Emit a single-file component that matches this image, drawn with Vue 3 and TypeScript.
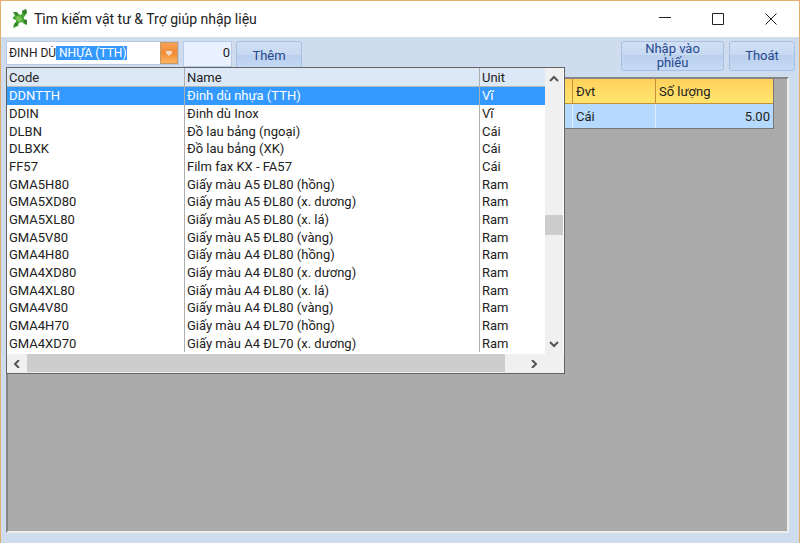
<script setup lang="ts">
import { onMounted, ref } from 'vue'

interface Item {
  code: string
  name: string
  unit: string
}

const items: Item[] = [
  { code: 'DDNTTH', name: 'Đinh dù nhựa (TTH)', unit: 'Vĩ' },
  { code: 'DDIN', name: 'Đinh dù Inox', unit: 'Vĩ' },
  { code: 'DLBN', name: 'Đồ lau bảng (ngoại)', unit: 'Cái' },
  { code: 'DLBXK', name: 'Đồ lau bảng (XK)', unit: 'Cái' },
  { code: 'FF57', name: 'Film fax KX - FA57', unit: 'Cái' },
  { code: 'GMA5H80', name: 'Giấy màu A5 ĐL80 (hồng)', unit: 'Ram' },
  { code: 'GMA5XD80', name: 'Giấy màu A5 ĐL80 (x. dương)', unit: 'Ram' },
  { code: 'GMA5XL80', name: 'Giấy màu A5 ĐL80 (x. lá)', unit: 'Ram' },
  { code: 'GMA5V80', name: 'Giấy màu A5 ĐL80 (vàng)', unit: 'Ram' },
  { code: 'GMA4H80', name: 'Giấy màu A4 ĐL80 (hồng)', unit: 'Ram' },
  { code: 'GMA4XD80', name: 'Giấy màu A4 ĐL80 (x. dương)', unit: 'Ram' },
  { code: 'GMA4XL80', name: 'Giấy màu A4 ĐL80 (x. lá)', unit: 'Ram' },
  { code: 'GMA4V80', name: 'Giấy màu A4 ĐL80 (vàng)', unit: 'Ram' },
  { code: 'GMA4H70', name: 'Giấy màu A4 ĐL70 (hồng)', unit: 'Ram' },
  { code: 'GMA4XD70', name: 'Giấy màu A4 ĐL70 (x. dương)', unit: 'Ram' },
]

const selected = ref(0)
const search = ref('ĐINH DÙ NHỰA (TTH)')
const quantity = ref('0')
const searchBox = ref<HTMLInputElement | null>(null)

function choose(index: number) {
  selected.value = index
  search.value = items[index].name.toUpperCase()
}

// The completed part of the name stays selected after the typed prefix.
onMounted(() => {
  const box = searchBox.value
  if (!box) return
  box.focus()
  box.setSelectionRange('ĐINH DÙ'.length, box.value.length)
})
</script>

<template>
  <div class="window">
    <header class="titlebar">
      <svg class="logo" viewBox="0 0 16 20" aria-hidden="true">
        <path fill="#4aa63a" d="M1 3L5 3L8 6L10 5L10 2L14 0L15 4L12 8L12 10L15 11L15 16L12 15L10 13L7 14L6 17L1 19L2 15L4 13L4 11L1 10L1 8L3 7Z" />
        <path fill="#78c850" d="M5 7L9 8L10 11L8 13L5 12L4 9Z" />
        <path fill="#35842b" d="M10 2L14 0L15 4L12 6ZM3 14L5 13L6 16L2 18ZM12 11L15 11L15 15L12 14ZM2 3L5 4L6 6L4 7Z" />
      </svg>
      <h1>Tìm kiếm vật tư &amp; Trợ giúp nhập liệu</h1>
      <div class="window-buttons">
        <button type="button" aria-label="Minimize">
          <svg viewBox="0 0 12 12"><path d="M0 4.5h12" /></svg>
        </button>
        <button type="button" aria-label="Maximize">
          <svg viewBox="0 0 12 12"><path d="M.5.5h11v11H.5z" /></svg>
        </button>
        <button type="button" aria-label="Close">
          <svg viewBox="0 0 12 12"><path d="M.5.5l11 11M11.5.5l-11 11" /></svg>
        </button>
      </div>
    </header>

    <main class="client">
      <div class="toolbar">
        <div class="combo">
          <input ref="searchBox" v-model="search" class="search" type="text" aria-label="Vật tư" spellcheck="false" />
          <button class="drop" type="button" aria-label="Open list">
            <svg viewBox="0 0 8 5"><path d="M1 0h6v2L4 5 1 2z" /></svg>
          </button>
          <div class="menu">
            <div class="menu-body">
              <table class="items">
                <thead>
                  <tr><th class="code">Code</th><th>Name</th><th class="unit">Unit</th></tr>
                </thead>
                <tbody>
                  <tr
                    v-for="(item, index) in items"
                    :key="item.code"
                    :class="{ active: index === selected }"
                    @click="choose(index)"
                  >
                    <td>{{ item.code }}</td>
                    <td>{{ item.name }}</td>
                    <td>{{ item.unit }}</td>
                  </tr>
                </tbody>
              </table>
              <div class="vscroll">
                <button type="button" aria-label="Scroll up">
                  <svg viewBox="0 0 10 8"><path d="M1 6l4-4 4 4" /></svg>
                </button>
                <div class="vtrack"><div class="vthumb"></div></div>
                <button type="button" aria-label="Scroll down">
                  <svg viewBox="0 0 10 8"><path d="M1 2l4 4 4-4" /></svg>
                </button>
              </div>
            </div>
            <div class="hscroll">
              <button type="button" aria-label="Scroll left">
                <svg viewBox="0 0 10 8"><path d="M7 0L3 4l4 4" /></svg>
              </button>
              <div class="htrack"><div class="hthumb"></div></div>
              <button type="button" aria-label="Scroll right">
                <svg viewBox="0 0 10 8"><path d="M3 0l4 4-4 4" /></svg>
              </button>
            </div>
          </div>
        </div>
        <input v-model="quantity" class="quantity" type="text" aria-label="Số lượng" />
        <button class="push add" type="button">Thêm</button>
        <span class="spacer"></span>
        <button class="push import" type="button">Nhập vào phiếu</button>
        <button class="push exit" type="button">Thoát</button>
      </div>

      <section class="sheet">
        <table class="lines">
          <thead>
            <tr><th></th><th class="dvt">Đvt</th><th class="qty">Số lượng</th></tr>
          </thead>
          <tbody>
            <tr><td></td><td>Cái</td><td class="number">5.00</td></tr>
          </tbody>
        </table>
      </section>
    </main>
  </div>
</template>

<style>
body {
  margin: 0;
  background: #cfdcee;
}
</style>

<style scoped>
.window {
  box-sizing: border-box;
  display: flex;
  flex-direction: column;
  min-height: 100vh;
  border: 1px solid #e4ae6c;
  border-bottom: 0;
  background: #cfdcee;
  color: #222;
  font-family: Roboto, "Liberation Sans", sans-serif;
  font-size: 13px;
}
button,
input {
  box-sizing: border-box;
  margin: 0;
  padding: 0;
  font: inherit;
  border-radius: 0;
  outline: 0;
}
svg {
  display: block;
}
.titlebar {
  display: flex;
  align-items: center;
  height: 36px;
  padding: 0 2px 0 11px;
  background: #fff;
}
.logo {
  width: 16px;
  height: 20px;
}
h1 {
  flex: 1;
  margin: 0 0 0 6px;
  font-size: 14px;
  font-weight: 400;
  line-height: 20px;
}
.window-buttons {
  display: flex;
}
.window-buttons button {
  display: grid;
  place-items: center;
  width: 53px;
  height: 36px;
  border: 0;
  background: none;
}
.window-buttons svg {
  width: 12px;
  height: 12px;
  fill: none;
  stroke: #222;
}
.client {
  flex: 1;
  display: flex;
  flex-direction: column;
  padding: 4px 10px 10px 5px;
}
.toolbar {
  display: flex;
  align-items: flex-start;
  height: 36px;
  margin-right: -6px;
}
.combo {
  position: relative;
  display: flex;
  width: 173px;
  height: 24px;
  border: 1px solid #b5c8e6;
  box-sizing: border-box;
}
.search {
  flex: 1;
  min-width: 0;
  border: 0;
  padding-left: 2px;
  background: #fff;
  color: #222;
  font-size: 12px;
}
.search::selection {
  background: #3399ff;
  color: #fff;
}
.drop {
  display: grid;
  place-items: center;
  width: 18px;
  border: 1px solid #c49a66;
  background: linear-gradient(#f8a255, #f18b38 50%, #ffb45e);
}
.drop svg {
  width: 8px;
  height: 5px;
  fill: #f0dcc8;
}
.quantity {
  width: 49px;
  height: 26px;
  margin-left: 4px;
  padding: 0 1px 3px 0;
  border: 1px solid #b9cbe9;
  background: #e9f1ff;
  text-align: right;
  color: #222;
}
.push {
  height: 30px;
  border: 1px solid #a6bfe2;
  border-radius: 3px;
  background: linear-gradient(#d1e0f4, #c7d9f1 45%, #b9cfec 46%, #c6dbf5);
  color: #25488f;
  line-height: 14px;
}
.add {
  width: 66px;
  margin-left: 4px;
}
.spacer {
  flex: 1;
}
.import {
  width: 103px;
  padding: 0 18px;
}
.exit {
  width: 66px;
  margin-left: 5px;
}
.menu {
  position: absolute;
  z-index: 2;
  top: 25px;
  left: -1px;
  width: 559px;
  box-sizing: border-box;
  border: 1px solid #646464;
  background: #fff;
}
.menu-body {
  display: flex;
  align-items: stretch;
  height: 286px;
}
.items {
  flex: 1;
  align-self: flex-start;
  height: 284px;
  table-layout: fixed;
  border-collapse: separate;
  border-spacing: 0;
}
.items th,
.items td {
  padding: 0 0 0 2px;
  border-left: 1px solid #adadad;
  font-weight: 400;
  line-height: 17px;
  text-align: left;
  white-space: nowrap;
}
.items th:first-child,
.items td:first-child {
  border-left: 0;
}
.items th {
  height: 18px;
  border-bottom: 1px solid #b0b8c0;
  background: #dce8f5;
}
.items .code {
  width: 175px;
}
.items .unit {
  width: 63px;
}
.active td {
  background: #3399ff;
  color: #fff;
}
.vscroll {
  display: flex;
  flex-direction: column;
  width: 18px;
  margin-right: 1px;
  background: #f0f0f0;
}
.vscroll button,
.hscroll button {
  display: grid;
  place-items: center;
  border: 0;
  background: none;
}
.vscroll button {
  height: 21px;
}
.vscroll svg,
.hscroll svg {
  width: 10px;
  height: 8px;
  fill: none;
  stroke: #555;
  stroke-width: 2;
}
.vtrack {
  flex: 1;
  padding-top: 126px;
}
.vthumb {
  height: 20px;
  background: #cdcdcd;
}
.hscroll {
  display: flex;
  height: 19px;
  padding-right: 20px;
  background: #f0f0f0;
}
.hscroll button {
  width: 20px;
}
.htrack {
  flex: 1;
  padding-right: 19px;
}
.hthumb {
  height: 18px;
  background: #cdcdcd;
}
.sheet {
  flex: 1;
  border: 2px solid #858585;
  border-right-color: #eee;
  border-bottom-color: #eee;
  background: #ababab;
  padding-right: 13px;
}
.lines {
  width: 100%;
  table-layout: fixed;
  border-collapse: separate;
  border-spacing: 0;
  border-right: 1px solid #777;
  border-bottom: 1px solid #777;
}
.lines th,
.lines td {
  box-sizing: border-box;
  height: 25px;
  padding: 0 3px;
  text-align: left;
  font-weight: 400;
}
.lines th {
  border-left: 1px solid #c98f35;
  border-bottom: 1px solid #c98f35;
  background: linear-gradient(#ffd05b, #ffe66f);
}
.lines td {
  height: 24px;
  border-left: 1px solid #e4eefa;
  background: #b5dafe;
}
.lines .number {
  text-align: right;
}
.lines .dvt {
  width: 83px;
}
.lines .qty {
  width: 118px;
}
</style>
